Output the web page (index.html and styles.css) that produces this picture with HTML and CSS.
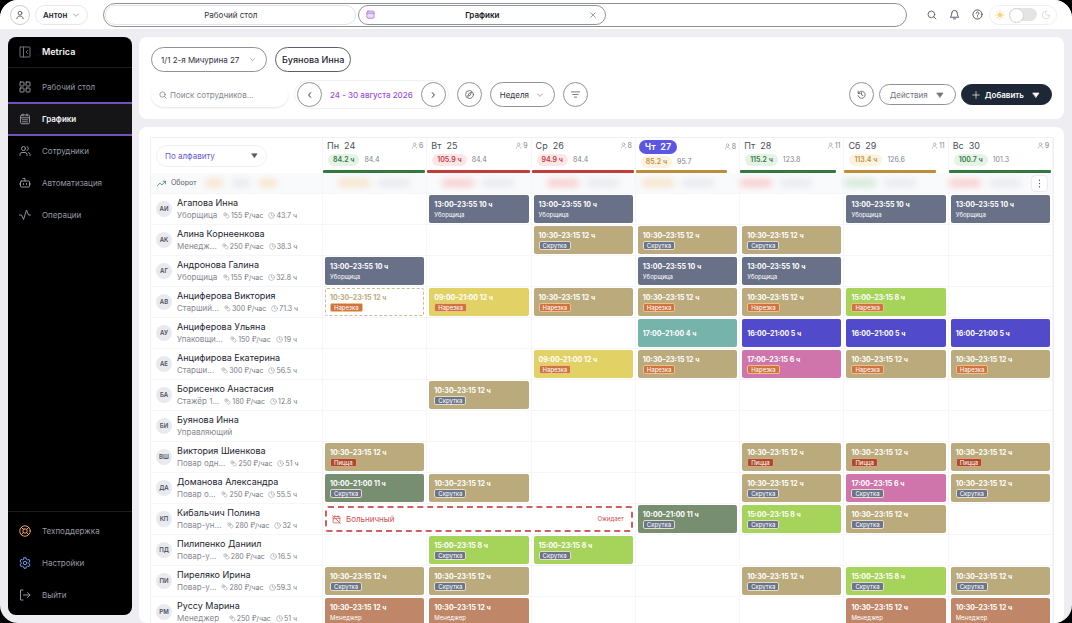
FILE: index.html
```html
<!DOCTYPE html>
<html lang="ru">
<head>
<meta charset="utf-8">
<meta name="viewport" content="width=device-width, initial-scale=1">
<title>Metrica — Графики</title>
<link rel="stylesheet" href="styles.css">
</head>
<body>
<svg class="sprite" aria-hidden="true">
  <symbol id="i-user" viewBox="0 0 24 24"><circle cx="12" cy="7.5" r="4.5"/><path d="M4.500 21c0-4 3-6.500 7.500-6.500s7.500 2.500 7.500 6.500"/></symbol>
  <symbol id="i-users" viewBox="0 0 24 24"><circle cx="9" cy="7" r="4"/><path d="M2 21v-2a4 4 0 0 1 4-4h6a4 4 0 0 1 4 4v2M16 3.200a4 4 0 0 1 0 7.600M22 21v-2a4 4 0 0 0-3-3.900"/></symbol>
  <symbol id="i-down" viewBox="0 0 24 24"><path d="m5 9 7 7 7-7"/></symbol>
  <symbol id="i-left" viewBox="0 0 24 24"><path d="m14 5-6 7 6 7"/></symbol>
  <symbol id="i-right" viewBox="0 0 24 24"><path d="m10 5 6 7-6 7"/></symbol>
  <symbol id="i-caret" viewBox="0 0 24 24"><path d="M3 6h18l-9 13z" fill="currentColor"/></symbol>
  <symbol id="i-search" viewBox="0 0 24 24"><circle cx="10.500" cy="10.500" r="8"/><path d="m16.500 16.500 5 5"/></symbol>
  <symbol id="i-calendar" viewBox="0 0 24 24"><rect x="3" y="4" width="18" height="17.500" rx="2.500"/><path d="M3 9.500h18M8 2v4M16 2v4M7 13.500h2M11 13.500h2M15 13.500h2M7 17.500h2M11 17.500h2M15 17.500h2"/></symbol>
  <symbol id="i-coins" viewBox="0 0 24 24"><circle cx="8" cy="8" r="5.500"/><path d="M17.500 10.500a5.500 5.500 0 1 1-7 7M7 6h1.500v4"/></symbol>
  <symbol id="i-clock" viewBox="0 0 24 24"><circle cx="12" cy="12" r="10"/><path d="M12 6v6l4 2"/></symbol>
</svg>

<div class="app">
  <header class="topbar">
    <button class="round small" aria-label="Профиль"><svg class="ic s10"><use href="#i-user"/></svg></button>
    <button class="account">Антон <svg class="ic s8"><use href="#i-down"/></svg></button>
    <nav class="tabs" aria-label="Вкладки">
      <a class="tab" href="#desk">Рабочий стол</a>
      <div class="tab current">
        <svg class="ic s9 violet" viewBox="0 0 24 24"><rect x="2.500" y="3" width="19" height="19" rx="3" fill="#eadcfa"/><path d="M2.500 8.500h19"/></svg>
        <a href="#schedule">Графики</a>
        <button class="close" aria-label="Закрыть"><svg class="ic s8" viewBox="0 0 24 24"><path d="m5 5 14 14M19 5 5 19"/></svg></button>
      </div>
    </nav>
    <div class="tools">
      <button class="tool" aria-label="Поиск"><svg class="ic s10"><use href="#i-search"/></svg></button>
      <button class="tool" aria-label="Уведомления"><svg class="ic s11" viewBox="0 0 24 24"><path d="M6 9a6 6 0 0 1 12 0c0 6 3 8 3 9H3c0-1 3-3 3-9M10 21.500h4"/></svg></button>
      <button class="tool" aria-label="Помощь"><svg class="ic s11" viewBox="0 0 24 24"><circle cx="12" cy="12" r="10"/><path d="M9 9.500a3 3 0 1 1 4.500 2.600c-1 .5-1.500 1-1.500 1.900M12 17v.5"/></svg></button>
    </div>
    <label class="theme">
      <svg class="ic s10 sun" viewBox="0 0 24 24"><circle cx="12" cy="12" r="4.500" fill="currentColor"/><path d="M12 1.500v3M12 19.500v3M1.500 12h3M19.500 12h3M4.500 4.500l2 2M17.500 17.500l2 2M19.500 4.500l-2 2M6.500 17.500l-2 2"/></svg>
      <input class="switch" type="checkbox" role="switch" aria-label="Тёмная тема">
      <svg class="ic s10 moon" viewBox="0 0 24 24"><path d="M12 3a6.500 6.500 0 0 0 9 9 9 9 0 1 1-9-9"/></svg>
    </label>
  </header>

  <div class="body">
    <aside class="sidebar">
      <div class="brand"><svg class="ic s12" viewBox="0 0 24 24"><rect x="2" y="2" width="20" height="20" rx="1"/><path d="M9 2v20M17 9l-3 3 3 3"/></svg>Metrica</div>
      <nav class="menu">
        <a href="#desk"><svg class="ic s12" viewBox="0 0 24 24"><rect x="2" y="2" width="8" height="8" rx="1"/><rect x="14" y="2" width="8" height="8" rx="1"/><rect x="2" y="14" width="8" height="8" rx="1"/><rect x="14" y="14" width="8" height="8" rx="1"/></svg>Рабочий стол</a>
        <a class="active" href="#schedule"><svg class="ic s12"><use href="#i-calendar"/></svg>Графики</a>
        <a href="#staff"><svg class="ic s12"><use href="#i-users"/></svg>Сотрудники</a>
        <a href="#auto"><svg class="ic s12" viewBox="0 0 24 24"><path d="M12 8V3H8M2 14H0M24 14h-2M9 13v2M15 13v2"/><rect x="3" y="8" width="18" height="12" rx="2"/></svg>Автоматизация</a>
        <a href="#ops"><svg class="ic s12" viewBox="0 0 24 24"><path d="M1 12h4l4 9 6-19 4 10h4"/></svg>Операции</a>
      </nav>
      <nav class="menu bottom">
        <a href="#help"><svg class="ic s12 orange" viewBox="0 0 24 24"><circle cx="12" cy="12" r="10.500"/><rect x="8" y="8" width="8" height="8" rx="2"/><path d="m4.500 4.500 4 4M15.500 15.500l4 4M19.500 4.500l-4 4M8.500 15.500l-4 4"/></svg>Техподдержка</a>
        <a href="#settings"><svg class="ic s12 blue" viewBox="0 0 24 24"><path d="M10 1.500h4l.7 3 2.300 1.300 3-.9 2 3.500-2.200 2.100v3l2.200 2.100-2 3.500-3-.9-2.300 1.300-.7 3h-4l-.7-3L7 18.200l-3 .9-2-3.500 2.200-2.100v-3L2 8.400l2-3.500 3 .9 2.300-1.300z"/><circle cx="12" cy="12" r="3.500"/></svg>Настройки</a>
        <a href="#exit"><svg class="ic s12" viewBox="0 0 24 24"><path d="M8 2H3v20h5M9 12h13M17 7l5 5-5 5"/></svg>Выйти</a>
      </nav>
    </aside>

    <main class="main">
      <section class="card controls">
        <div class="line">
          <label class="select place"><select aria-label="Точка"><option>1/1 2-я Мичурина 27</option></select><svg class="ic s7"><use href="#i-down"/></svg></label>
          <button class="pill person">Буянова Инна</button>
        </div>
        <div class="line">
          <label class="search"><svg class="ic s8"><use href="#i-search"/></svg><input type="search" placeholder="Поиск сотрудников..." aria-label="Поиск сотрудников"></label>
          <div class="period">
            <button class="round" aria-label="Назад"><svg class="ic s8"><use href="#i-left"/></svg></button>
            <span>24 - 30 августа 2026</span>
            <button class="round" aria-label="Вперёд"><svg class="ic s8"><use href="#i-right"/></svg></button>
          </div>
          <button class="round" aria-label="Сегодня"><svg class="ic s9" viewBox="0 0 24 24"><circle cx="12" cy="12" r="10.500"/><path d="m17 7-3 7-7 3 3-7z"/></svg></button>
          <label class="select range"><select aria-label="Период"><option>Неделя</option></select><svg class="ic s8"><use href="#i-down"/></svg></label>
          <button class="round" aria-label="Фильтр"><svg class="ic s9" viewBox="0 0 24 24"><path d="M1 5h22M5 12h14M9 19h6"/></svg></button>
          <button class="round push" aria-label="История"><svg class="ic s9" viewBox="0 0 24 24"><path d="M3 3v6h6M3.500 9a9.500 9.500 0 1 1-.5 6M12 7v6l4 2"/></svg></button>
          <button class="pill actions">Действия <svg class="ic s8"><use href="#i-caret"/></svg></button>
          <button class="pill add"><svg class="ic s8" viewBox="0 0 24 24"><path d="M12 2v20M2 12h20"/></svg>Добавить <svg class="ic s8 end"><use href="#i-caret"/></svg></button>
        </div>
      </section>

      <section class="card board">
        <table class="grid">
          <colgroup><col class="staff-col"><col><col><col><col><col><col><col></colgroup>
          <thead>
            <tr class="days">
              <th><label class="sort"><select aria-label="Сортировка"><option>По алфавиту</option></select><svg class="ic s7"><use href="#i-caret"/></svg></label></th>
              <th><div class="day"><div class="date"><span>Пн&nbsp; 24</span><small><svg class="ic s7"><use href="#i-user"/></svg>6</small></div><div class="hours"><b class="ok">84.2 ч</b>84.4</div><i class="bar ok" style="width:99%"></i></div></th>
              <th><div class="day"><div class="date"><span>Вт&nbsp; 25</span><small><svg class="ic s7"><use href="#i-user"/></svg>9</small></div><div class="hours"><b class="bad">105.9 ч</b>84.4</div><i class="bar bad" style="width:99%"></i></div></th>
              <th><div class="day"><div class="date"><span>Ср&nbsp; 26</span><small><svg class="ic s7"><use href="#i-user"/></svg>8</small></div><div class="hours"><b class="bad">94.9 ч</b>84.4</div><i class="bar bad" style="width:99%"></i></div></th>
              <th><div class="day"><div class="date"><span class="today">Чт&nbsp; 27</span><small><svg class="ic s7"><use href="#i-user"/></svg>8</small></div><div class="hours"><b class="warn">85.2 ч</b>95.7</div><i class="bar warn" style="width:88%"></i></div></th>
              <th><div class="day"><div class="date"><span>Пт&nbsp; 28</span><small><svg class="ic s7"><use href="#i-user"/></svg>11</small></div><div class="hours"><b class="ok">115.2 ч</b>123.8</div><i class="bar ok" style="width:93%"></i></div></th>
              <th><div class="day"><div class="date"><span>Сб&nbsp; 29</span><small><svg class="ic s7"><use href="#i-user"/></svg>11</small></div><div class="hours"><b class="warn">113.4 ч</b>126.6</div><i class="bar warn" style="width:89%"></i></div></th>
              <th><div class="day"><div class="date"><span>Вс&nbsp; 30</span><small><svg class="ic s7"><use href="#i-user"/></svg>9</small></div><div class="hours"><b class="ok">100.7 ч</b>101.3</div><i class="bar ok" style="width:99%"></i></div></th>
            </tr>
            <tr class="turnover">
              <th><div class="sum"><svg class="ic s9 green" viewBox="0 0 24 24"><path d="m1 18 7-7 5 5L22 7M16 6h7v7"/></svg>Оборот <i class="haze short tan-haze"></i><i class="haze short"></i><i class="haze short tan-haze"></i></div></th>
              <td><div class="sum day-sum"><i class="haze tan-haze"></i><i class="haze"></i></div></td>
              <td><div class="sum day-sum"><i class="haze red-haze"></i><i class="haze"></i></div></td>
              <td><div class="sum day-sum"><i class="haze red-haze"></i><i class="haze"></i></div></td>
              <td><div class="sum near"><i class="haze tan-haze"></i><i class="haze"></i></div></td>
              <td><div class="sum flush"><i class="haze red-haze"></i><i class="haze"></i></div></td>
              <td><div class="sum flush"><i class="haze green-haze"></i><i class="haze"></i></div></td>
              <td><div class="sum flush"><i class="haze red-haze"></i><i class="haze"></i><button class="more" aria-label="Ещё"><svg class="ic s9" viewBox="0 0 24 24"><path d="M12 3v1M12 11.500v1M12 20v1"/></svg></button></div></td>
            </tr>
          </thead>
          <tbody>
            <tr><th><div class="staff"><span class="face">АИ</span><div class="who"><p>Агапова Инна</p><div class="meta"><span>Уборщица</span><small><svg class="ic s7"><use href="#i-coins"/></svg>155 ₽/час</small><small><svg class="ic s7"><use href="#i-clock"/></svg>43.7 ч</small></div></div></div></th>
              <td></td><td><div class="shift slate"><b>13:00–23:55 10 ч</b><span>Уборщица</span></div></td><td><div class="shift slate"><b>13:00–23:55 10 ч</b><span>Уборщица</span></div></td><td></td><td></td><td><div class="shift slate"><b>13:00–23:55 10 ч</b><span>Уборщица</span></div></td><td><div class="shift slate"><b>13:00–23:55 10 ч</b><span>Уборщица</span></div></td></tr>
            <tr><th><div class="staff"><span class="face">АК</span><div class="who"><p>Алина Корнеенкова</p><div class="meta"><span>Менедж...</span><small><svg class="ic s7"><use href="#i-coins"/></svg>250 ₽/час</small><small><svg class="ic s7"><use href="#i-clock"/></svg>38.3 ч</small></div></div></div></th>
              <td></td><td></td><td><div class="shift tan"><b>10:30–23:15 12 ч</b><em>Скрутка</em></div></td><td><div class="shift tan"><b>10:30–23:15 12 ч</b><em>Скрутка</em></div></td><td><div class="shift tan"><b>10:30–23:15 12 ч</b><em>Скрутка</em></div></td><td></td><td></td></tr>
            <tr><th><div class="staff"><span class="face">АГ</span><div class="who"><p>Андронова Галина</p><div class="meta"><span>Уборщица</span><small><svg class="ic s7"><use href="#i-coins"/></svg>155 ₽/час</small><small><svg class="ic s7"><use href="#i-clock"/></svg>32.8 ч</small></div></div></div></th>
              <td><div class="shift slate"><b>13:00–23:55 10 ч</b><span>Уборщица</span></div></td><td></td><td></td><td><div class="shift slate"><b>13:00–23:55 10 ч</b><span>Уборщица</span></div></td><td><div class="shift slate"><b>13:00–23:55 10 ч</b><span>Уборщица</span></div></td><td></td><td></td></tr>
            <tr><th><div class="staff"><span class="face">АВ</span><div class="who"><p>Анциферова Виктория</p><div class="meta"><span>Старший...</span><small><svg class="ic s7"><use href="#i-coins"/></svg>300 ₽/час</small><small><svg class="ic s7"><use href="#i-clock"/></svg>71.3 ч</small></div></div></div></th>
              <td><div class="shift draft"><b>10:30–23:15 12 ч</b><em class="cut">Нарезка</em></div></td><td><div class="shift yellow"><b>09:00–21:00 12 ч</b><em class="cut">Нарезка</em></div></td><td><div class="shift tan"><b>10:30–23:15 12 ч</b><em class="cut">Нарезка</em></div></td><td><div class="shift tan"><b>10:30–23:15 12 ч</b><em class="cut">Нарезка</em></div></td><td><div class="shift tan"><b>10:30–23:15 12 ч</b><em class="cut">Нарезка</em></div></td><td><div class="shift lime"><b>15:00–23:15 8 ч</b><em class="cut">Нарезка</em></div></td><td></td></tr>
            <tr><th><div class="staff"><span class="face">АУ</span><div class="who"><p>Анциферова Ульяна</p><div class="meta"><span>Упаковщи...</span><small><svg class="ic s7"><use href="#i-coins"/></svg>150 ₽/час</small><small><svg class="ic s7"><use href="#i-clock"/></svg>19 ч</small></div></div></div></th>
              <td></td><td></td><td></td><td><div class="shift teal"><b>17:00–21:00 4 ч</b></div></td><td><div class="shift indigo"><b>16:00–21:00 5 ч</b></div></td><td><div class="shift indigo"><b>16:00–21:00 5 ч</b></div></td><td><div class="shift indigo"><b>16:00–21:00 5 ч</b></div></td></tr>
            <tr><th><div class="staff"><span class="face">АЕ</span><div class="who"><p>Анцифирова Екатерина</p><div class="meta"><span>Старши...</span><small><svg class="ic s7"><use href="#i-coins"/></svg>300 ₽/час</small><small><svg class="ic s7"><use href="#i-clock"/></svg>56.5 ч</small></div></div></div></th>
              <td></td><td></td><td><div class="shift yellow"><b>09:00–21:00 12 ч</b><em class="cut">Нарезка</em></div></td><td><div class="shift tan"><b>10:30–23:15 12 ч</b><em class="cut">Нарезка</em></div></td><td><div class="shift pink"><b>17:00–23:15 6 ч</b><em class="cut">Нарезка</em></div></td><td><div class="shift tan"><b>10:30–23:15 12 ч</b><em class="cut">Нарезка</em></div></td><td><div class="shift tan"><b>10:30–23:15 12 ч</b><em class="cut">Нарезка</em></div></td></tr>
            <tr><th><div class="staff"><span class="face">БА</span><div class="who"><p>Борисенко Анастасия</p><div class="meta"><span>Стажёр 1...</span><small><svg class="ic s7"><use href="#i-coins"/></svg>180 ₽/час</small><small><svg class="ic s7"><use href="#i-clock"/></svg>12.8 ч</small></div></div></div></th>
              <td></td><td><div class="shift tan"><b>10:30–23:15 12 ч</b><em>Скрутка</em></div></td><td></td><td></td><td></td><td></td><td></td></tr>
            <tr><th><div class="staff"><span class="face">БИ</span><div class="who"><p>Буянова Инна</p><div class="meta"><span>Управляющий</span></div></div></div></th>
              <td></td><td></td><td></td><td></td><td></td><td></td><td></td></tr>
            <tr><th><div class="staff"><span class="face">ВШ</span><div class="who"><p>Виктория Шиенкова</p><div class="meta"><span>Повар одн...</span><small><svg class="ic s7"><use href="#i-coins"/></svg>250 ₽/час</small><small><svg class="ic s7"><use href="#i-clock"/></svg>51 ч</small></div></div></div></th>
              <td><div class="shift tan"><b>10:30–23:15 12 ч</b><em class="pizza">Пицца</em></div></td><td></td><td></td><td></td><td><div class="shift tan"><b>10:30–23:15 12 ч</b><em class="pizza">Пицца</em></div></td><td><div class="shift tan"><b>10:30–23:15 12 ч</b><em class="pizza">Пицца</em></div></td><td><div class="shift tan"><b>10:30–23:15 12 ч</b><em class="pizza">Пицца</em></div></td></tr>
            <tr><th><div class="staff"><span class="face">ДА</span><div class="who"><p>Доманова Александра</p><div class="meta"><span>Повар о...</span><small><svg class="ic s7"><use href="#i-coins"/></svg>250 ₽/час</small><small><svg class="ic s7"><use href="#i-clock"/></svg>55.5 ч</small></div></div></div></th>
              <td><div class="shift moss"><b>10:00–21:00 11 ч</b><em>Скрутка</em></div></td><td><div class="shift tan"><b>10:30–23:15 12 ч</b><em>Скрутка</em></div></td><td></td><td></td><td><div class="shift tan"><b>10:30–23:15 12 ч</b><em>Скрутка</em></div></td><td><div class="shift pink"><b>17:00–23:15 6 ч</b><em>Скрутка</em></div></td><td><div class="shift tan"><b>10:30–23:15 12 ч</b><em>Скрутка</em></div></td></tr>
            <tr><th><div class="staff"><span class="face">КП</span><div class="who"><p>Кибальчич Полина</p><div class="meta"><span>Повар-ун...</span><small><svg class="ic s7"><use href="#i-coins"/></svg>280 ₽/час</small><small><svg class="ic s7"><use href="#i-clock"/></svg>32 ч</small></div></div></div></th>
              <td colspan="3"><div class="sick"><svg class="ic s9" viewBox="0 0 24 24"><path d="M7 4h12a2 2 0 0 1 2 2v11M21 21H5a2 2 0 0 1-2-2V5M2 2l20 20M11 9h10M8 2v2M16 2v4M3 10h6"/></svg>Больничный<small>Ожидает</small></div></td><td><div class="shift moss"><b>10:00–21:00 11 ч</b><em>Скрутка</em></div></td><td><div class="shift lime"><b>15:00–23:15 8 ч</b><em>Скрутка</em></div></td><td><div class="shift tan"><b>10:30–23:15 12 ч</b><em>Скрутка</em></div></td><td></td></tr>
            <tr><th><div class="staff"><span class="face">ПД</span><div class="who"><p>Пилипенко Даниил</p><div class="meta"><span>Повар-у...</span><small><svg class="ic s7"><use href="#i-coins"/></svg>280 ₽/час</small><small><svg class="ic s7"><use href="#i-clock"/></svg>16.5 ч</small></div></div></div></th>
              <td></td><td><div class="shift lime"><b>15:00–23:15 8 ч</b><em>Скрутка</em></div></td><td><div class="shift lime"><b>15:00–23:15 8 ч</b><em>Скрутка</em></div></td><td></td><td></td><td></td><td></td></tr>
            <tr><th><div class="staff"><span class="face">ПИ</span><div class="who"><p>Пиреляко Ирина</p><div class="meta"><span>Повар-у...</span><small><svg class="ic s7"><use href="#i-coins"/></svg>280 ₽/час</small><small><svg class="ic s7"><use href="#i-clock"/></svg>59.3 ч</small></div></div></div></th>
              <td><div class="shift tan"><b>10:30–23:15 12 ч</b><em>Скрутка</em></div></td><td><div class="shift tan"><b>10:30–23:15 12 ч</b><em>Скрутка</em></div></td><td></td><td></td><td><div class="shift tan"><b>10:30–23:15 12 ч</b><em>Скрутка</em></div></td><td><div class="shift lime"><b>15:00–23:15 8 ч</b><em>Скрутка</em></div></td><td><div class="shift tan"><b>10:30–23:15 12 ч</b><em>Скрутка</em></div></td></tr>
            <tr><th><div class="staff"><span class="face">РМ</span><div class="who"><p>Руссу Марина</p><div class="meta"><span>Менеджер</span><small><svg class="ic s7"><use href="#i-coins"/></svg>250 ₽/час</small><small><svg class="ic s7"><use href="#i-clock"/></svg>51 ч</small></div></div></div></th>
              <td><div class="shift clay"><b>10:30–23:15 12 ч</b><span>Менеджер</span></div></td><td><div class="shift clay"><b>10:30–23:15 12 ч</b><span>Менеджер</span></div></td><td></td><td></td><td></td><td><div class="shift clay"><b>10:30–23:15 12 ч</b><span>Менеджер</span></div></td><td><div class="shift clay"><b>10:30–23:15 12 ч</b><span>Менеджер</span></div></td></tr>
          </tbody>
        </table>
      </section>
    </main>
  </div>
</div>
</body>
</html>
```

FILE: styles.css
```css
* { box-sizing: border-box; }
body { margin: 0; background: #000; color: #30333d; font: 400 8px/10px Inter, "Noto Sans", sans-serif; }
button, input, select { font: inherit; color: inherit; margin: 0; }
button { padding: 0; border: 0; background: none; display: flex; align-items: center; justify-content: center; cursor: pointer; }
a { color: inherit; text-decoration: none; }
p { margin: 0; }
small { font-size: 7px; }

.sprite { display: none; }
.ic { flex: none; display: block; fill: none; stroke: currentColor; stroke-width: 2; stroke-linecap: round; stroke-linejoin: round; }
.s7 { width: 7px; height: 7px; }
.s8 { width: 8px; height: 8px; }
.s9 { width: 9px; height: 9px; }
.s10 { width: 10px; height: 10px; }
.s11 { width: 11px; height: 11px; }
.s12 { width: 12px; height: 12px; }
.violet { color: #a566e3; }
.green { color: #2e7d46; }

.app { height: 100vh; display: flex; flex-direction: column; overflow: hidden; border-radius: 18px; background: #eeeef2; }

/* Top bar */
.topbar { flex: none; height: 29px; padding: 0 15px 0 10px; display: flex; align-items: center; background: #fff; }
.round { flex: none; width: 25px; height: 25px; border: 1px solid #8f9299; border-radius: 50%; background: #fff; color: #4a4d57; }
.round.small { width: 20px; height: 20px; border-color: #c9cbd0; }
.account { height: 20px; margin-left: 5px; padding: 0 7px; gap: 5px; border: 1px solid #e6e7ea; border-radius: 10px; font-weight: 600; color: #23262f; }
.account .ic, .select .ic { color: #70737c; }
.tabs { flex: 1; height: 24px; margin-left: 15px; padding: 1px; display: flex; align-items: center; gap: 2px; border: 1px solid #8f9299; border-radius: 12px; }
.tab { flex: 0 1 251px; height: 20px; display: flex; align-items: center; justify-content: center; border: 1px solid #e2e3e6; border-radius: 10px; }
.tab.current { flex-basis: 248px; padding: 0 8px 0 7px; justify-content: space-between; border-color: #8f9299; font-weight: 600; color: #14161c; }
.close { color: #70737c; }
.tools { margin-left: 20px; display: flex; align-items: center; gap: 12px; color: #4a4d57; }
.theme { margin-left: 6px; height: 20px; padding: 0 5px; display: flex; align-items: center; gap: 4px; border: 1px solid #f0f0f2; border-radius: 10px; }
.sun { color: #f3cf78; }
.moon { color: #d5d6da; }
.switch { appearance: none; width: 28px; height: 13px; padding: 0; display: flex; border-radius: 7px; background: #e4e4e7; }
.switch::before { content: ""; width: 13px; height: 13px; border: 1px solid #d3d3d7; border-radius: 50%; background: #fff; }
.switch:checked { justify-content: flex-end; }

.body { flex: 1; min-height: 0; display: flex; gap: 7px; padding: 8px 8px 0; }

/* Sidebar */
.sidebar { flex: none; width: 124px; margin-bottom: 8px; display: flex; flex-direction: column; overflow: hidden; border-radius: 8px; background: #000; color: #9698a2; }
.brand { height: 31px; padding: 0 11px; display: flex; align-items: center; gap: 11px; border-bottom: 1px solid #1c1c20; font-size: 9px; font-weight: 600; color: #f4f4f6; }
.brand .ic { color: #6e7079; }
.menu { display: flex; flex-direction: column; padding-top: 3px; }
.menu a { height: 32px; padding: 0 11px; display: flex; align-items: center; gap: 11px; }
.menu .ic { color: #92949d; }
.menu .orange { color: #e8a06a; }
.menu .blue { color: #6f9cec; }
.menu .active { height: 34px; margin: -1px 0; border: solid #7451bd; border-width: 2px 0; background: #151517; font-weight: 600; color: #f4f4f6; }
.menu.bottom { margin-top: auto; padding: 3px 0 4px; border-top: 1px solid #1c1c20; }

/* Controls card */
.main { flex: 1; min-width: 0; display: flex; flex-direction: column; gap: 8px; }
.card { border-radius: 8px; background: #fff; }
.controls { padding: 10px 12px; display: flex; flex-direction: column; gap: 8px; }
.line { display: flex; align-items: center; gap: 8px; }
.select { height: 25px; padding: 0 10px 0 9px; display: flex; align-items: center; border: 1px solid #8f9299; border-radius: 13px; }
.select select, .sort select { appearance: none; flex: 1; min-width: 0; padding: 0; border: 0; outline: 0; background: none; }
.place { width: 116px; }
.range { width: 65px; }
.pill { height: 21px; border: 1px solid #8f9299; border-radius: 13px; }
.person { height: 25px; padding: 0 6px; border-color: #5d6069; font-size: 9px; font-weight: 500; color: #23262f; }
.search { width: 137px; height: 25px; padding: 0 8px; display: flex; align-items: center; gap: 3px; border-radius: 13px; box-shadow: 0 1px 2px #e4e4e9; color: #6f727b; }
.search input { flex: 1; min-width: 0; padding: 0; border: 0; outline: 0; background: none; }
.search input::placeholder { color: #858892; }
.period { height: 29px; margin-left: -2px; padding: 0 2px; display: flex; align-items: center; gap: 8px; border: 1px solid #f1f1f4; border-radius: 15px; font-weight: 500; color: #9b51e0; }
.period .round { color: #30333d; }
.period .ic { stroke-width: 3; }
.push { margin-left: auto; }
.controls .push + .pill { margin-left: -3px; }
.actions { padding: 0 11px 0 10px; gap: 8px; color: #70737c; }
.add { padding: 0 11px 0 10px; margin-left: -3px; gap: 5px; border-color: #1d2735; background: #1d2735; font-weight: 600; color: #fff; }
.add .end { margin-left: 3px; }

/* Schedule */
.board { flex: 1; min-height: 0; overflow: hidden; padding: 10px 10px 0 11px; }
.grid { width: 100%; table-layout: fixed; border-spacing: 0; border: 1px solid #f0f0f3; }
.staff-col { width: 172px; }
.grid th, .grid td { padding: 0; border: solid #f6f6f8; border-width: 0 1px 1px 0; font-weight: 400; text-align: left; vertical-align: top; }
.grid tbody tr { height: 31px; }
.grid .days th { height: 35px; border-bottom: 0; vertical-align: middle; }
.sort { width: 111px; height: 22px; margin-left: 5px; padding: 0 8px; display: flex; align-items: center; border: 1px solid #f0f0f3; border-radius: 11px; color: #6359d6; }
.sort .ic { color: #55575f; }
.day { height: 35px; padding-top: 1px; display: flex; flex-direction: column; }
.date { padding: 0 3px 0 4px; display: flex; align-items: center; justify-content: space-between; font-size: 9px; line-height: 13px; color: #4b4e58; }
.date small { display: flex; align-items: center; gap: 1px; color: #80838c; }
.today { margin: 1px 0 0 -1px; padding: 0 6px; border-radius: 7px; background: #5b57e3; font-weight: 600; line-height: 14px; color: #fff; }
.hours { margin: 2px 0 0 5px; display: flex; align-items: center; gap: 5px; font-size: 7px; color: #80838c; }
.hours b { padding: 0 5px; border-radius: 6px; font-weight: 600; line-height: 12px; }
b.ok { background: #e6f2e8; color: #2f7d3c; }
b.bad { background: #fbe7e7; color: #c8383a; }
b.warn { background: #fbf3e2; color: #c38e36; }
.bar { height: 3px; margin-top: auto; border-radius: 1px; }
.bar.ok { background: #35783e; }
.bar.bad { background: #c33b3b; }
.bar.warn { background: #bd8d3b; }

.turnover { background: #f9fafc; }
.sum { height: 20px; padding-left: 6px; display: flex; align-items: center; gap: 5px; font-size: 7px; color: #5b5e68; }
.haze { width: 32px; height: 8px; border-radius: 4px; background: #e9eaee; filter: blur(3px); }
.haze.short { width: 18px; margin-left: 4px; }
.day-sum { padding-left: 15px; gap: 8px; }
.near { padding-left: 6px; gap: 8px; }
.flush { padding-left: 0; gap: 8px; }
.haze.tan-haze { background: #f6e5cb; }
.haze.red-haze { background: #f8cfd0; }
.haze.green-haze { background: #d3e8d7; }
.more { width: 17px; height: 17px; margin: 0 4px 0 auto; border: 1px solid #ececf0; border-radius: 4px; background: #fff; }
.more .ic { stroke-width: 3; }

.staff { height: 30px; padding-left: 5px; display: flex; align-items: center; gap: 5px; }
.face { flex: none; width: 16px; height: 16px; border-radius: 50%; background: #e9eaef; font-size: 6px; font-weight: 600; line-height: 16px; text-align: center; color: #4d505d; }
.who { width: 120px; }
.who p { font-size: 9px; line-height: 13px; color: #23262f; }
.meta { display: flex; align-items: center; gap: 5px; line-height: 13px; white-space: nowrap; color: #858892; }
.meta span { flex: 1; }
.meta small { display: flex; align-items: center; gap: 1px; color: #777a84; }
.meta .ic, .date .ic { color: #9a9ca4; }

.shift { height: 28px; margin: 1px 2px; padding: 0 5px; display: flex; flex-direction: column; align-items: flex-start; justify-content: center; border-radius: 2px; font-size: 6px; line-height: 9px; white-space: nowrap; color: #fff; }
.shift b { font-size: 7px; font-weight: 700; line-height: 11px; }
.shift em { padding: 0 3px; border: 1px solid #e3dcc8; border-radius: 2px; background: #6b7489; font-style: normal; line-height: 7px; }
.shift .cut { border-color: #f0c08a; background: #cf7440; }
.shift .pizza { border-color: #dba285; background: #ae4a2c; }
.slate { background: #687187; }
.tan { background: #bbab7c; }
.yellow { background: #e2d165; }
.lime { background: #a6d45a; }
.teal { background: #76b3aa; }
.indigo { background: #514bcc; }
.pink { background: #d075ab; }
.moss { background: #788e70; }
.clay { background: #bf8767; }
.draft { padding: 0 4px; border: 1px dashed #c9bd97; background: #fff; color: #bbab7c; }
.draft em { color: #fff; }
.sick { height: 26px; margin: 2px; padding: 0 7px 0 5px; display: flex; align-items: center; gap: 5px; border: 2px dashed #cb6262; border-radius: 3px; color: #d0514f; }
.sick small { margin-left: auto; font-size: 6px; }
```
